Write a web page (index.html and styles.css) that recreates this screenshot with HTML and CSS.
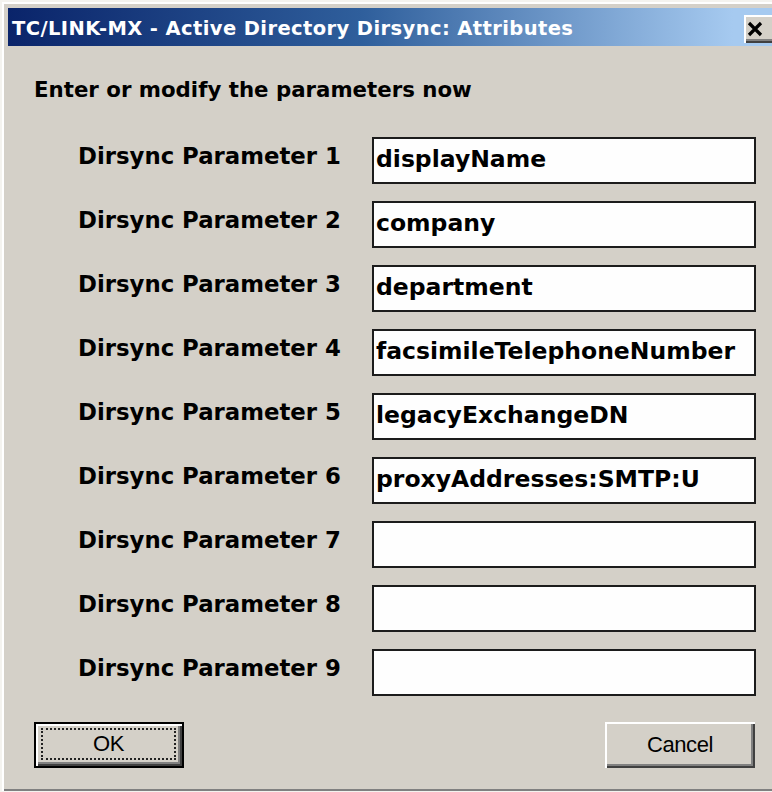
FILE: index.html
```html
<!DOCTYPE html>
<html lang="en">
<head>
<meta charset="utf-8">
<title>TC/LINK-MX - Active Directory Dirsync: Attributes</title>
<link rel="stylesheet" href="styles.css">
</head>
<body>
<div class="window">
  <div class="titlebar">
    <span class="title">TC/LINK-MX - Active Directory Dirsync: Attributes</span>
    <button class="close" aria-label="Close">
      <svg width="16" height="16" viewBox="0 0 16 16"><path d="M2 2 L14 14 M14 2 L2 14" stroke="#000" stroke-width="3.2" fill="none"/></svg>
    </button>
  </div>
  <div class="content">
    <p class="prompt">Enter or modify the parameters now</p>
    <div class="params">
      <span class="label">Dirsync Parameter 1</span><div class="field">displayName</div>
      <span class="label">Dirsync Parameter 2</span><div class="field">company</div>
      <span class="label">Dirsync Parameter 3</span><div class="field">department</div>
      <span class="label">Dirsync Parameter 4</span><div class="field">facsimileTelephoneNumber</div>
      <span class="label">Dirsync Parameter 5</span><div class="field">legacyExchangeDN</div>
      <span class="label">Dirsync Parameter 6</span><div class="field">proxyAddresses:SMTP:U</div>
      <span class="label">Dirsync Parameter 7</span><div class="field"></div>
      <span class="label">Dirsync Parameter 8</span><div class="field"></div>
      <span class="label">Dirsync Parameter 9</span><div class="field"></div>
    </div>
    <div class="buttons">
      <button class="btn btn-default"><span class="focus">OK</span></button>
      <button class="btn">Cancel</button>
    </div>
  </div>
</div>
</body>
</html>
```
FILE: styles.css
```css
html, body {
  margin: 0;
  padding: 0;
  background: #f4f3ef;
  overflow: hidden;
}

/* dialog frame, wider than the viewport on the right */
.window {
  margin: 2px 0 0 2px;
  width: 800px;
  height: 789px;
  box-sizing: border-box;
  padding: 6px;
  background: #d4d0c8;
  box-shadow: inset 2px 2px #ffffff, inset -2px -2px #808080;
}

.titlebar {
  height: 38px;
  display: flex;
  align-items: flex-start;
  justify-content: space-between;
  background: linear-gradient(to right, #0a246a 0%, #2f5f9c 45%, #a6caf0 92%);
}

.title {
  font-family: "DejaVu Sans", sans-serif;
  font-weight: bold;
  font-size: 19.5px;
  letter-spacing: 0.4px;
  line-height: 38px;
  padding: 2px 0 0 4px;
  color: #ffffff;
  white-space: nowrap;
}

.close {
  margin: 7px 20px 0 0;
  width: 32px;
  height: 28px;
  padding: 0;
  display: flex;
  align-items: center;
  justify-content: center;
  background: #d4d0c8;
  border: none;
  box-shadow: inset 2px 2px #ffffff, inset -2px -2px #404040, inset -4px -4px #808080;
}

.close svg {
  margin: -1px 0 0 -10px;
}

.content {
  padding: 30px 0 0 26px;
  width: 722px;
  font-family: "DejaVu Sans", sans-serif;
  font-weight: bold;
  color: #000;
}

.prompt {
  margin: 0;
  font-size: 21.3px;
  line-height: 28px;
}

.params {
  margin: 33px 0 0 44px;
  display: grid;
  grid-template-columns: 294px 384px;
  row-gap: 17px;
}

.label {
  font-size: 22.8px;
  line-height: 28px;
  padding-top: 5px;
  white-space: nowrap;
}

.field {
  height: 47px;
  box-sizing: border-box;
  border: 2px solid #1c1c1c;
  background: #fefefe;
  font-size: 23.5px;
  line-height: 40px;
  padding-left: 2px;
  white-space: nowrap;
  overflow: hidden;
}

.buttons {
  margin-top: 26px;
  display: flex;
  justify-content: space-between;
  padding-right: 1px;
}

.btn {
  width: 150px;
  height: 46px;
  box-sizing: border-box;
  padding: 0;
  font-family: "Liberation Sans", Arial, sans-serif;
  font-size: 22px;
  letter-spacing: -0.4px;
  color: #000;
  background: #d4d0c8;
  border: none;
  box-shadow: inset 2px 2px #ffffff, inset -2px -2px #404040, inset -4px -4px #808080;
  display: flex;
  align-items: center;
  justify-content: center;
}

.btn-default {
  border: 2px solid #000;
  padding: 4px 6px 6px 5px;
}

.focus {
  flex: 1;
  align-self: stretch;
  display: flex;
  align-items: center;
  justify-content: center;
  border: 2px dotted #222;
}
```
